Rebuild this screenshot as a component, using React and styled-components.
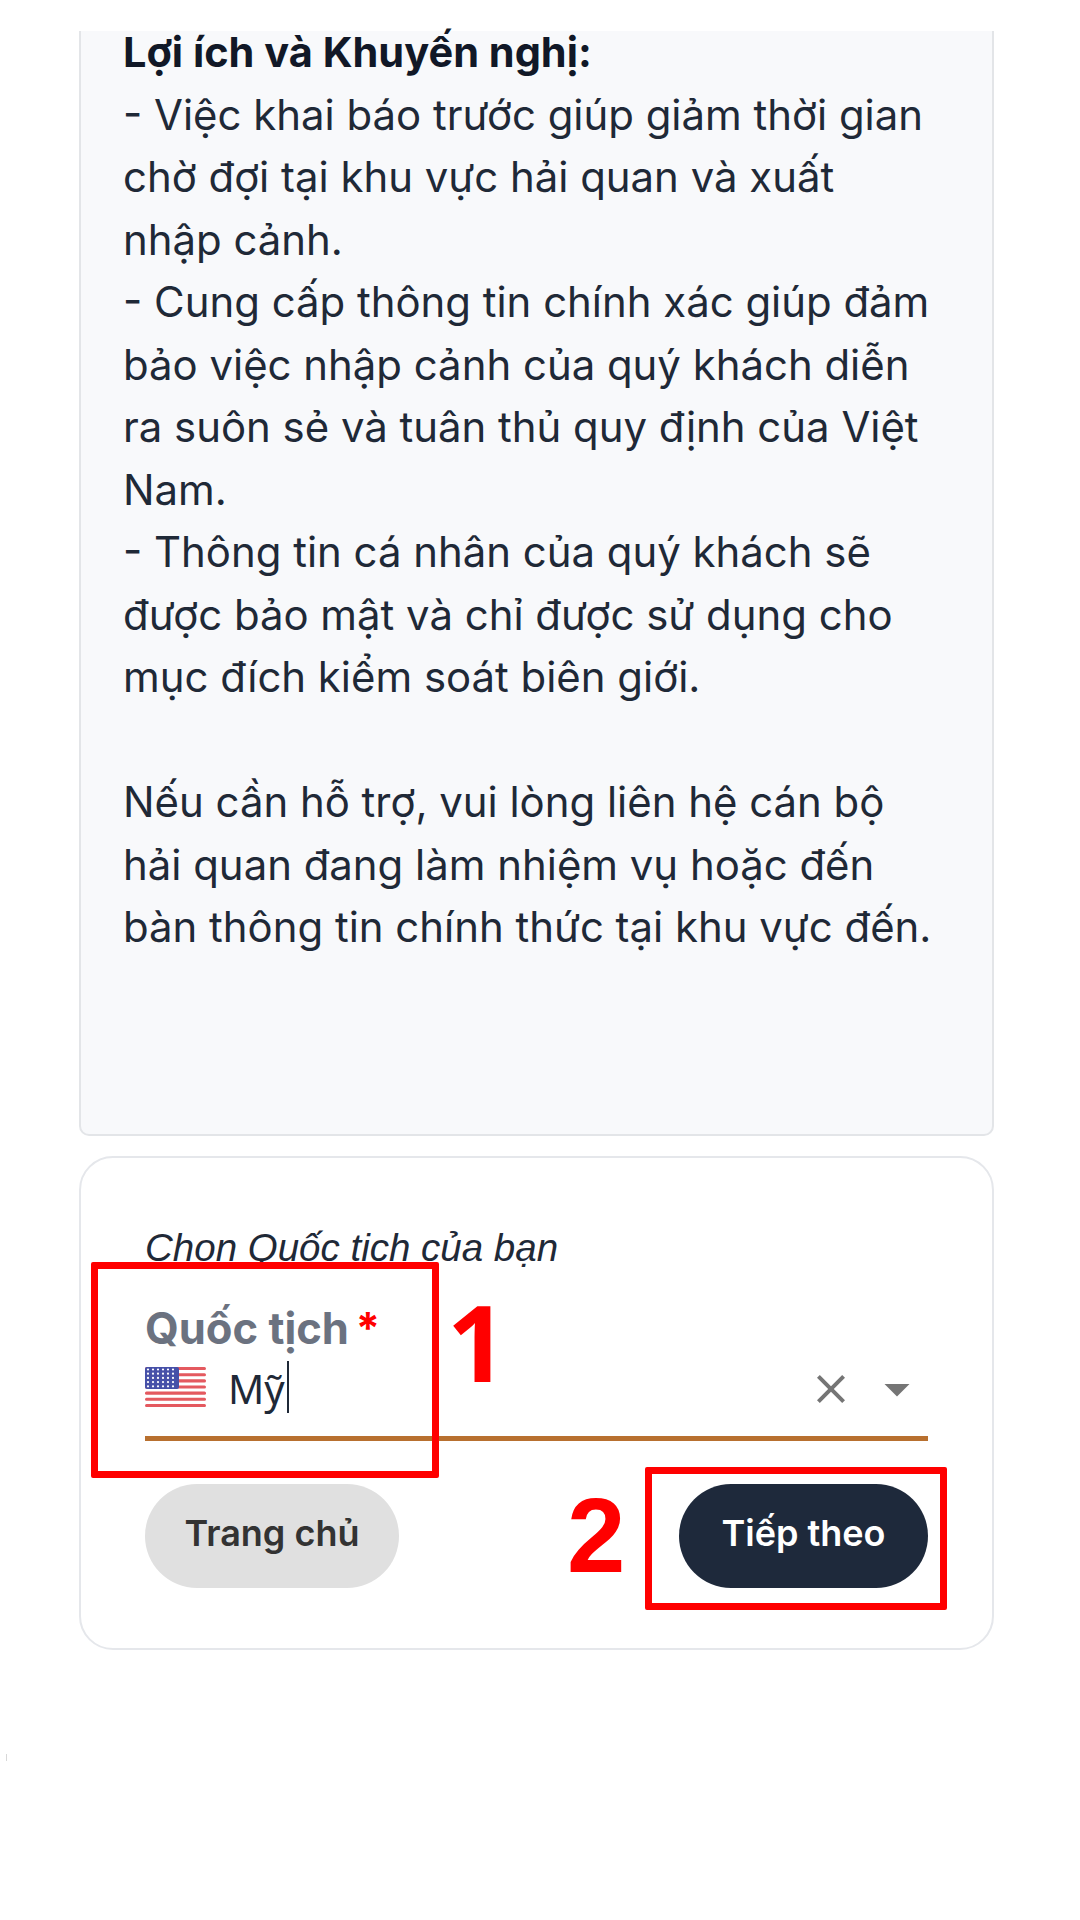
import React from "react";
import styled, { createGlobalStyle } from "styled-components";

const GlobalStyle = createGlobalStyle`
  html, body {
    margin: 0;
    padding: 0;
    background: #ffffff;
  }
`;

function UsFlag() {
  const stripes = [0, 1, 2, 3, 4, 5, 6];
  const stars = [];
  for (let row = 0; row < 5; row++) {
    for (let col = 0; col < 6; col++) {
      stars.push(<circle key={`${row}-${col}`} cx={3 + col * 5} cy={2.5 + row * 4.2} r="1.1" fill="#fff" />);
    }
  }
  return (
    <FlagSvg viewBox="0 0 61 40">
      <rect width="61" height="40" rx="3" fill="#fff" />
      {stripes.map((i) => (
        <rect key={i} y={i * 6.15} width="61" height="3.1" rx="1.5" fill="#e4595f" />
      ))}
      <rect width="34" height="22" rx="2" fill="#4650a8" />
      {stars}
    </FlagSvg>
  );
}

export default function App() {
  return (
    <Page>
      <GlobalStyle />
      <InfoCard>
        <Strong>Lợi ích và Khuyến nghị:</Strong>
        <Para>- Việc khai báo trước giúp giảm thời gian chờ đợi tại khu vực hải quan và xuất nhập cảnh.</Para>
        <Para>- Cung cấp thông tin chính xác giúp đảm bảo việc nhập cảnh của quý khách diễn ra suôn sẻ và tuân thủ quy định của Việt Nam.</Para>
        <Para>- Thông tin cá nhân của quý khách sẽ được bảo mật và chỉ được sử dụng cho mục đích kiểm soát biên giới.</Para>
        <Para $spaced>Nếu cần hỗ trợ, vui lòng liên hệ cán bộ hải quan đang làm nhiệm vụ hoặc đến bàn thông tin chính thức tại khu vực đến.</Para>
      </InfoCard>

      <FormCard>
        <Caption>Chon Quốc tich của bạn</Caption>
        <Field>
          <FieldLabel>
            Quốc tịch<Required>*</Required>
          </FieldLabel>
          <InputRow>
            <UsFlag />
            <InputValue>Mỹ</InputValue>
            <Caret />
            <Icons>
              <ClearIcon viewBox="0 0 24 24">
                <path d="M19 6.41 17.59 5 12 10.59 6.41 5 5 6.41 10.59 12 5 17.59 6.41 19 12 13.41 17.59 19 19 17.59 13.41 12z" />
              </ClearIcon>
              <DropIcon viewBox="0 0 24 24">
                <path d="M7 10l5 5 5-5z" />
              </DropIcon>
            </Icons>
          </InputRow>
        </Field>
        <Actions>
          <HomeButton>Trang chủ</HomeButton>
          <NextButton>Tiếp theo</NextButton>
        </Actions>

        <FieldMark />
        <FieldNumber>1</FieldNumber>
        <ButtonMark />
        <ButtonNumber>2</ButtonNumber>
      </FormCard>
      <Speck />
    </Page>
  );
}

const Page = styled.div`
  position: relative;
  width: 1080px;
  height: 1920px;
  padding: 31px 86px 0 79px;
  box-sizing: border-box;
  background: #ffffff;
  font-family: Inter, "Noto Sans", sans-serif;
  overflow: hidden;
`;

const InfoCard = styled.div`
  display: flow-root;
  box-sizing: border-box;
  height: 1105px;
  padding: 0 55px 0 42px;
  background: #f8f9fb;
  border: 2px solid #e3e5e8;
  border-top: none;
  border-radius: 0 0 10px 10px;
  color: #1f2937;
  font-size: 41.9px;
  line-height: 62.5px;
`;

const Strong = styled.div`
  margin-top: -10px;
  font-size: 41.5px;
  font-weight: 700;
  color: #111827;
`;

const Para = styled.div`
  margin-top: ${(props) => (props.$spaced ? "62.5px" : "0")};
`;

const FormCard = styled.div`
  position: relative;
  box-sizing: border-box;
  height: 494px;
  margin-top: 20px;
  padding: 69px 64px 0 64px;
  background: #ffffff;
  border: 2px solid #e5e7eb;
  border-radius: 34px;
`;

const Caption = styled.div`
  font-family: "Liberation Sans", Arial, sans-serif;
  font-style: italic;
  font-size: 38.5px;
  line-height: 42px;
  color: #1f2937;
`;

const Field = styled.div`
  margin-top: 36px;
  border-bottom: 5px solid #b8702f;
`;

const FieldLabel = styled.div`
  font-size: 43.5px;
  line-height: 46px;
  font-weight: 700;
  color: #6b7280;
`;

const Required = styled.span`
  margin-left: 7px;
  color: #ff0000;
`;

const InputRow = styled.div`
  display: flex;
  align-items: center;
  height: 72px;
  padding-bottom: 13px;
`;

const FlagSvg = styled.svg`
  width: 61px;
  height: 40px;
  flex: none;
`;

const InputValue = styled.span`
  margin: 3px 0 0 22px;
  font-family: "Noto Sans", sans-serif;
  font-size: 40px;
  color: #1f2937;
`;

const Caret = styled.span`
  width: 2px;
  height: 52px;
  margin-left: 2px;
  background: #1f2937;
`;

const Icons = styled.div`
  display: flex;
  align-items: center;
  margin: 3px 16px 0 auto;
`;

const ClearIcon = styled.svg`
  width: 48px;
  height: 48px;
  fill: #757575;
`;

const DropIcon = styled.svg`
  width: 60px;
  height: 60px;
  margin-left: 12px;
  margin-right: -15px;
  fill: #757575;
`;

const Actions = styled.div`
  display: flex;
  justify-content: space-between;
  margin-top: 43px;
`;

const HomeButton = styled.button`
  width: 254px;
  height: 104px;
  padding: 0 0 6px;
  border: none;
  border-radius: 52px;
  background: #e0e0e0;
  color: #333333;
  font-family: Inter, sans-serif;
  font-size: 36px;
  font-weight: 600;
`;

const NextButton = styled(HomeButton)`
  width: 249px;
  background: #1e293b;
  color: #ffffff;
`;

const FieldMark = styled.div`
  position: absolute;
  left: 10px;
  top: 104px;
  width: 348px;
  height: 216px;
  box-sizing: border-box;
  border: 7px solid #ff0000;
  border-radius: 2px;
`;

const ButtonMark = styled(FieldMark)`
  left: 564px;
  top: 309px;
  width: 302px;
  height: 143px;
`;

const FieldNumber = styled.div`
  position: absolute;
  left: 366px;
  top: 124px;
  font-family: "Open Sans", sans-serif;
  font-size: 105px;
  line-height: 120px;
  font-weight: 700;
  color: #ff0000;
`;

const ButtonNumber = styled(FieldNumber)`
  left: 486px;
  top: 318px;
  font-family: "Liberation Sans", Arial, sans-serif;
`;

const Speck = styled.div`
  position: absolute;
  left: 6px;
  top: 1754px;
  width: 1px;
  height: 7px;
  background: #d8d8d8;
`;
